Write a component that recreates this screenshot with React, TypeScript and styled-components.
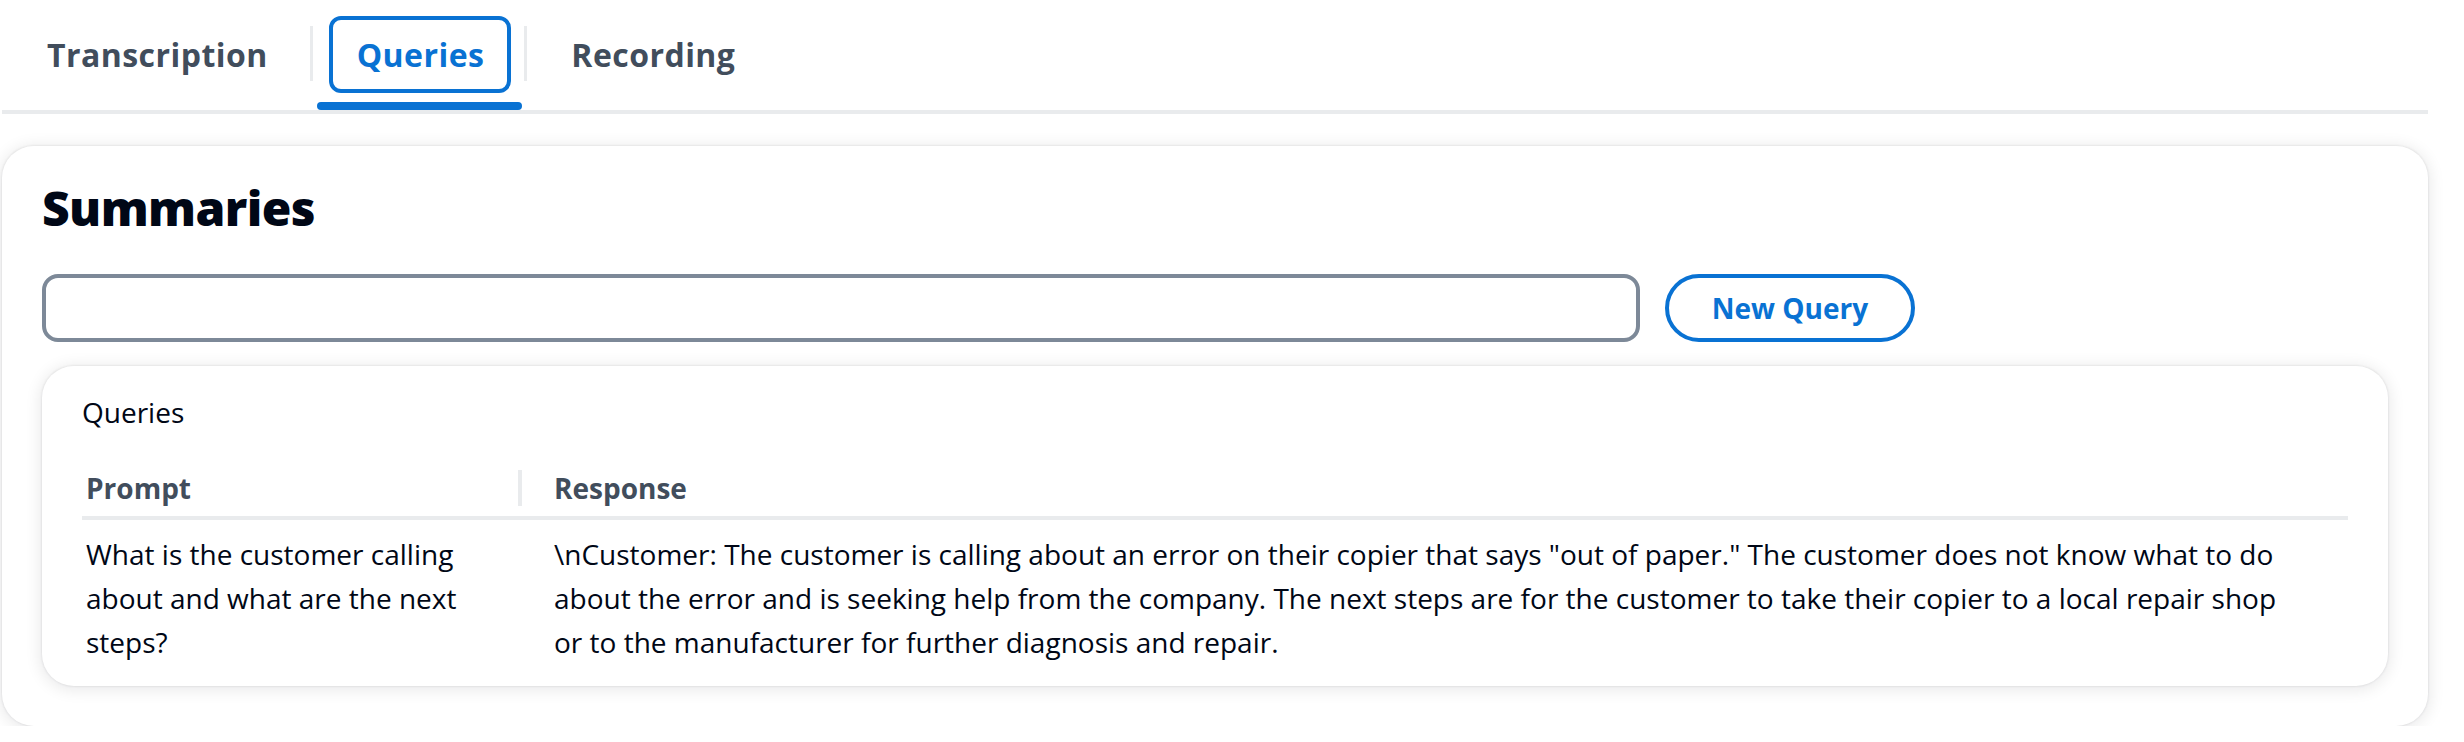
import React from 'react';
import styled, { createGlobalStyle } from 'styled-components';

const GlobalStyle = createGlobalStyle`
  html, body {
    margin: 0;
    padding: 0;
    background: #ffffff;
  }
  body {
    font-family: "Open Sans", "Noto Sans", sans-serif;
    color: #000716;
    -webkit-font-smoothing: antialiased;
  }
`

const Page = styled.div`
  width: 2464px;
  box-sizing: border-box;
  padding: 0 36px 0 2px;
`

const TabList = styled.div`
  display: flex;
  align-items: stretch;
  height: 110px;
  border-bottom: 4px solid #e9ebed;
`

const Tab = styled.div<{ active?: boolean }>`
  position: relative;
  display: flex;
  align-items: center;
  padding: 0 40px 0 44px;
  font-size: 32px;
  font-weight: 700;
  line-height: 44px;
  letter-spacing: 0.45px;
  color: ${props => props.active ? '#0972d3' : '#414d5c'};
  &:first-child {
    padding: 0 42px 0 45px;
  }
`

const TabDivider = styled.div`
  align-self: flex-start;
  margin-top: 26px;
  width: 3px;
  height: 55px;
  background-color: #e9ebed;
`

const FocusRing = styled.div`
  position: absolute;
  top: 16px;
  left: 16px;
  right: 13px;
  bottom: 17px;
  border: 4px solid #0972d3;
  border-radius: 12px;
`

const ActiveBar = styled.div`
  position: absolute;
  left: 4px;
  right: 2px;
  bottom: 0;
  height: 8px;
  border-radius: 4px;
  background-color: #0972d3;
`

const Card = styled.div<{ inner?: boolean }>`
  background-color: #ffffff;
  border-radius: 32px;
  margin-top: ${props => props.inner ? '24px' : '32px'};
  padding: ${props => props.inner ? '24px 40px 22px 40px' : '32px 40px 40px 40px'};
  box-shadow: 0 0 2px 1px rgba(0, 7, 22, 0.06), 0 2px 16px 2px rgba(0, 7, 22, 0.09);
`

const Heading = styled.h1`
  margin: 0;
  font-size: 48px;
  line-height: 60px;
  font-weight: 800;
  letter-spacing: -0.6px;
  color: #000716;
`

const QueryRow = styled.div`
  display: flex;
  align-items: center;
  gap: 25px;
  margin-top: 36px;
`

const QueryInput = styled.input`
  width: 1598px;
  height: 68px;
  box-sizing: border-box;
  border: 4px solid #7d8998;
  border-radius: 16px;
  padding: 0 24px;
  font-family: inherit;
  font-size: 28px;
  outline: none;
  background: #ffffff;
`

const NewQueryButton = styled.button`
  width: 250px;
  height: 68px;
  box-sizing: border-box;
  border: 4px solid #0972d3;
  border-radius: 34px;
  background: #ffffff;
  color: #0972d3;
  font-family: inherit;
  font-size: 28px;
  font-weight: 700;
  line-height: 44px;
  cursor: pointer;
`

const TableTitle = styled.div`
  font-size: 28px;
  line-height: 44px;
  color: #000716;
`

const Table = styled.table`
  width: 100%;
  margin-top: 24px;
  border-collapse: separate;
  border-spacing: 0;
  table-layout: fixed;
`

const HeadCell = styled.th<{ width?: number; divided?: boolean }>`
  position: relative;
  box-sizing: border-box;
  width: ${props => props.width ? `${props.width}px` : 'auto'};
  padding: 8px 20px 6px ${props => props.divided ? '36px' : '4px'};
  border-bottom: 4px solid #e9ebed;
  text-align: left;
  font-size: 28px;
  line-height: 44px;
  font-weight: 700;
  color: #414d5c;
  &::before {
    content: '';
    display: ${props => props.divided ? 'block' : 'none'};
    position: absolute;
    left: 0;
    top: 12px;
    width: 4px;
    height: 36px;
    background-color: #e9ebed;
  }
`

const BodyCell = styled.td<{ wide?: boolean }>`
  vertical-align: top;
  padding: 12px ${props => props.wide ? '58px' : '20px'} 0 ${props => props.wide ? '36px' : '4px'};
  font-size: 28px;
  line-height: 44px;
  color: #000716;
`

const queries = [
  {
    prompt: 'What is the customer calling about and what are the next steps?',
    response: '\\nCustomer: The customer is calling about an error on their copier that says "out of paper." The customer does not know what to do about the error and is seeking help from the company. The next steps are for the customer to take their copier to a local repair shop or to the manufacturer for further diagnosis and repair.',
  },
]

const App = () => {
  return (
    <Page>
      <GlobalStyle />
      <TabList>
        <Tab>Transcription</Tab>
        <TabDivider />
        <Tab active>
          Queries
          <FocusRing />
          <ActiveBar />
        </Tab>
        <TabDivider />
        <Tab>Recording</Tab>
      </TabList>

      <Card>
        <Heading>Summaries</Heading>
        <QueryRow>
          <QueryInput type="text" />
          <NewQueryButton>New Query</NewQueryButton>
        </QueryRow>

        <Card inner>
          <TableTitle>Queries</TableTitle>
          <Table>
            <thead>
              <tr>
                <HeadCell width={436}>Prompt</HeadCell>
                <HeadCell divided>Response</HeadCell>
              </tr>
            </thead>
            <tbody>
              {queries.map((q, i) => (
                <tr key={i}>
                  <BodyCell>{q.prompt}</BodyCell>
                  <BodyCell wide>{q.response}</BodyCell>
                </tr>
              ))}
            </tbody>
          </Table>
        </Card>
      </Card>
    </Page>
  )
}

export default App;
